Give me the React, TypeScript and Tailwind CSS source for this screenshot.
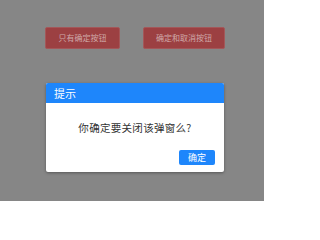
import React from "react";

export default function App() {
  const font = { fontFamily: '"Noto Sans CJK SC", "Noto Sans", sans-serif' };
  return (
    <div
      className="relative w-[264px] h-[201px] bg-[#868686] overflow-hidden"
      style={font}
    >
      <div className="flex gap-[23px] pl-[45px] pt-[27px]">
        <button className="w-[75px] h-[22px] rounded-[2px] bg-[#9c4042] border border-[#a35759] text-[8px] leading-none text-[#cfa9a9]">
          只有确定按钮
        </button>
        <button className="w-[82px] h-[22px] rounded-[2px] bg-[#9c4042] border border-[#a35759] text-[8px] leading-none text-[#cfa9a9]">
          确定和取消按钮
        </button>
      </div>
      <div className="absolute inset-0 flex justify-start pl-[46px] pt-[83px]">
        <div className="w-[178px] h-[89px] bg-white rounded-[2px] overflow-hidden shadow-[0_1px_3px_rgba(0,0,0,0.35)] flex flex-col">
          <div className="h-[20px] bg-[#1e86fb] text-white text-[11px] leading-[20px] pl-[8px]">
            提示
          </div>
          <div className="flex-1 flex items-center justify-center text-[10.5px] tracking-[0.3px] text-[#333333] pt-[2px]">
            你确定要关闭该弹窗么?
          </div>
          <div className="flex justify-end pr-[9px] pb-[7px]">
            <button className="w-[36px] h-[15px] rounded-[2px] bg-[#1e86fb] text-white text-[9px] leading-none">
              确定
            </button>
          </div>
        </div>
      </div>
    </div>
  );
}
